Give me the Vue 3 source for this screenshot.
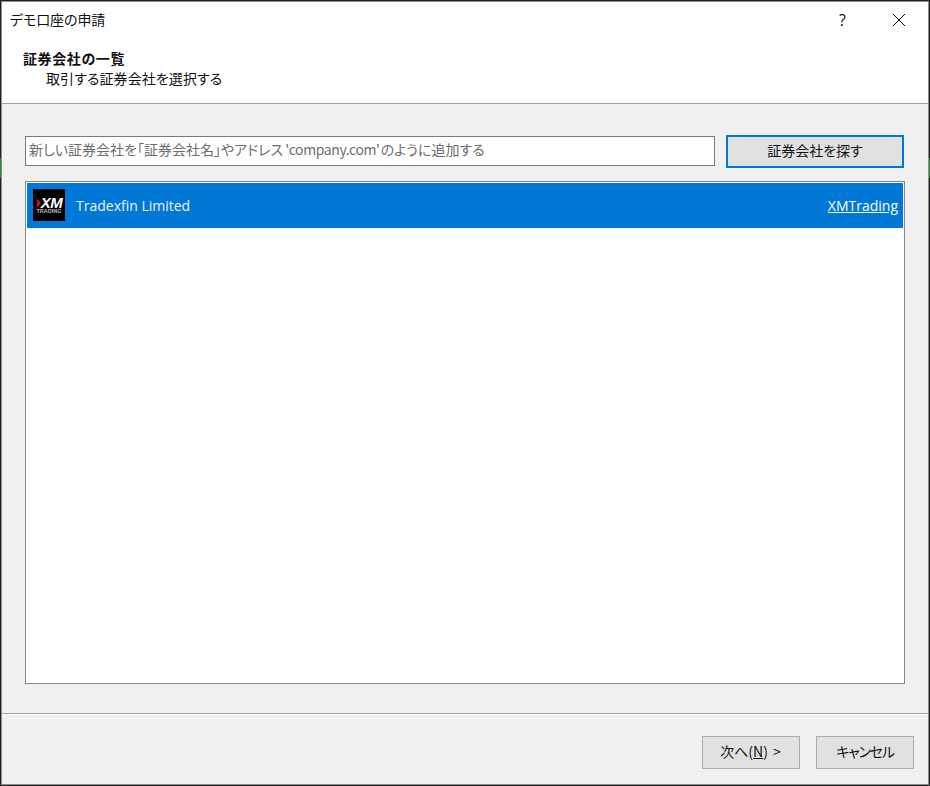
<script setup>
const title = 'デモ口座の申請'
</script>

<template>
  <div class="window">
    <header class="head">
      <div class="titlebar">
        <span class="title">{{ title }}</span>
        <span class="help">?</span>
        <svg class="close" width="14" height="14" viewBox="0 0 14 14"><path d="M1 1 L13 13 M13 1 L1 13" stroke="#111" stroke-width="1" fill="none"/></svg>
      </div>
      <div class="intro">
        <div class="h1">証券会社の一覧</div>
        <div class="h2">取引する証券会社を選択する</div>
      </div>
    </header>
    <main class="body">
      <div class="search">
        <div class="input">新しい証券会社を「証券会社名」やアドレス<span class="latin">'company.com'</span>のように追加する</div>
        <button class="find"><span class="lift">証券会社を探す</span></button>
      </div>
      <div class="list">
        <div class="row">
          <div class="logo">
            <div class="mark">
              <svg width="5" height="10" viewBox="0 0 5 10"><path d="M0 0 L5 5 L0 10 L1.5 5 Z" fill="#e8112d"/></svg>
              <span class="xm">XM</span>
            </div>
            <div class="trading">TRADING</div>
          </div>
          <span class="name">Tradexfin Limited</span>
          <a class="link">XMTrading</a>
        </div>
      </div>
    </main>
    <footer class="foot">
      <button class="btn"><span class="lift next">次へ(<u>N</u>) &gt;</span></button>
      <button class="btn"><span class="lift cancel">キャンセル</span></button>
    </footer>
  </div>
</template>

<style>
html {
  background: linear-gradient(to bottom, #222 0, #222 158px, #1f8a2e 158px, #1f8a2e 178px, #222 178px) no-repeat;
  background-color: #222;
}
body { margin: 0; }
</style>

<style scoped>
.window {
  width: 928px;
  height: 784px;
  margin: 1px 0 0 1px;
  box-sizing: border-box;
  display: flex;
  flex-direction: column;
  background: #f0f0f0;
  border: 1px solid #8c8c8c;
  font-family: "Noto Sans CJK JP", "Noto Sans", sans-serif;
  font-size: 14px;
  font-feature-settings: "palt";
  color: #111;
}
.head {
  height: 102px;
  box-sizing: border-box;
  background: #fff;
  border-bottom: 1px solid #a0a0a0;
  flex: none;
}
.titlebar {
  height: 35px;
  display: flex;
  align-items: center;
  padding-left: 8px;
  padding-right: 22px;
}
.title { flex: 1; line-height: 35px; letter-spacing: -0.1px; }
.help {
  font-family: "Open Sans", sans-serif;
  font-size: 16px;
  margin-right: 46px;
}
.close { flex: none; }
.intro { padding: 11px 0 0 21px; line-height: 20px; }
.h1 { font-weight: 700; letter-spacing: 0.6px; }
.h2 { padding-left: 23px; letter-spacing: 0.08px; }
.body {
  flex: 1;
  display: flex;
  flex-direction: column;
  padding: 31px 23px 29px 23px;
  min-height: 0;
}
.search {
  display: flex;
  align-items: flex-start;
  gap: 11px;
  height: 33px;
  margin-bottom: 13px;
}
.input {
  width: 690px;
  height: 30px;
  margin-top: 1px;
  box-sizing: border-box;
  border: 1px solid #7a7a7a;
  background: #fff;
  color: #6d6d6d;
  padding-left: 3px;
  line-height: 24px;
  white-space: nowrap;
  overflow: hidden;
}
.latin { letter-spacing: -0.4px; margin: 0 1px 0 2px; }
.find {
  width: 178px;
  height: 33px;
  box-sizing: border-box;
  border: 2px solid #0078d7;
  background: #e1e1e1;
  font: inherit;
  font-feature-settings: inherit;
  color: #111;
  padding: 0;
}
.lift { position: relative; top: -2px; }
.next { word-spacing: 2px; margin-right: 1px; }
.cancel { letter-spacing: -1.2px; }
.list {
  flex: 1;
  border: 1px solid #828790;
  background: #fff;
  padding: 1px;
  min-height: 0;
}
.row {
  height: 45px;
  background: #0078d7;
  color: #fff;
  display: flex;
  align-items: center;
  padding: 0 5px 0 6px;
}
.logo {
  width: 32px;
  height: 32px;
  margin-bottom: 1px;
  background: #000;
  flex: none;
  display: flex;
  flex-direction: column;
  align-items: center;
  justify-content: center;
  color: #fff;
  overflow: hidden;
}
.mark { display: flex; align-items: center; height: 11px; margin-top: 1px; }
.xm {
  font-family: "Liberation Sans", sans-serif;
  font-weight: 700;
  font-style: italic;
  font-size: 15px;
  line-height: 11px;
  letter-spacing: -0.5px;
}
.trading {
  font-family: "Liberation Sans", sans-serif;
  font-size: 5.5px;
  font-weight: 700;
  line-height: 6px;
  color: #bbb;
}
.name {
  flex: 1;
  margin-left: 11px;
  font-family: "Open Sans", "Noto Sans", sans-serif;
  font-size: 14px;
  color: #f2f2f2;
}
.link {
  font-family: "Open Sans", "Noto Sans", sans-serif;
  font-size: 14px;
  text-decoration: underline;
}
.foot {
  height: 71px;
  flex: none;
  box-sizing: border-box;
  border-top: 1px solid #a0a0a0;
  box-shadow: inset 0 1px 0 #fff;
  display: flex;
  justify-content: flex-end;
  align-items: flex-start;
  gap: 16px;
  padding: 22px 14px 0 0;
}
.btn {
  width: 98px;
  height: 33px;
  box-sizing: border-box;
  border: 1px solid #adadad;
  background: #e1e1e1;
  font: inherit;
  font-feature-settings: inherit;
  color: #111;
  padding: 0;
}
</style>
